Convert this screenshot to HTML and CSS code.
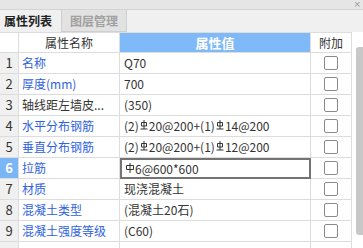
FILE: index.html
```html
<!DOCTYPE html>
<html>
<head>
<meta charset="utf-8">
<link rel="stylesheet" href="styles.css">
</head>
<body>
<div class="panel">
  <div class="titlebar"><span class="close">×</span></div>
  <div class="tabs">
    <div class="tab active">属性列表</div>
    <div class="tab">图层管理</div>
  </div>
  <div class="gridwrap">
    <div class="grid">
      <div class="c num hd"></div>
      <div class="c name hd center">属性名称</div>
      <div class="c val hd valhd">属性值</div>
      <div class="c add hd center">附加</div>

      <div class="c num">1</div>
      <div class="c name blue">名称</div>
      <div class="c val">Q70</div>
      <div class="c add"><span class="cb"></span></div>

      <div class="c num">2</div>
      <div class="c name blue">厚度(mm)</div>
      <div class="c val">700</div>
      <div class="c add"><span class="cb"></span></div>

      <div class="c num">3</div>
      <div class="c name">轴线距左墙皮...</div>
      <div class="c val">(350)</div>
      <div class="c add"><span class="cb"></span></div>

      <div class="c num">4</div>
      <div class="c name blue">水平分布钢筋</div>
      <div class="c val">(2)<svg class="rb" viewBox="0 0 8 10"><path d="M1.5 2.5h5v3.5h-5z M4 0v9 M0.5 9h7" fill="none" stroke="#333" stroke-width="1"/></svg>20@200+(1)<svg class="rb" viewBox="0 0 8 10"><path d="M1.5 2.5h5v3.5h-5z M4 0v9 M0.5 9h7" fill="none" stroke="#333" stroke-width="1"/></svg>14@200</div>
      <div class="c add"><span class="cb"></span></div>

      <div class="c num">5</div>
      <div class="c name blue">垂直分布钢筋</div>
      <div class="c val">(2)<svg class="rb" viewBox="0 0 8 10"><path d="M1.5 2.5h5v3.5h-5z M4 0v9 M0.5 9h7" fill="none" stroke="#333" stroke-width="1"/></svg>20@200+(1)<svg class="rb" viewBox="0 0 8 10"><path d="M1.5 2.5h5v3.5h-5z M4 0v9 M0.5 9h7" fill="none" stroke="#333" stroke-width="1"/></svg>12@200</div>
      <div class="c add"><span class="cb"></span></div>

      <div class="c num sel">6</div>
      <div class="c name blue">拉筋</div>
      <div class="c val edit"><svg class="rb" viewBox="0 0 8 10"><path d="M0.5 2.5h7v4h-7z M4 0v10" fill="none" stroke="#333" stroke-width="1"/></svg>6@600*600</div>
      <div class="c add"><span class="cb"></span></div>

      <div class="c num">7</div>
      <div class="c name blue">材质</div>
      <div class="c val">现浇混凝土</div>
      <div class="c add"><span class="cb"></span></div>

      <div class="c num">8</div>
      <div class="c name blue">混凝土类型</div>
      <div class="c val">(混凝土20石)</div>
      <div class="c add"><span class="cb"></span></div>

      <div class="c num">9</div>
      <div class="c name blue">混凝土强度等级</div>
      <div class="c val">(C60)</div>
      <div class="c add"><span class="cb"></span></div>

      <div class="c num"></div>
      <div class="c name"></div>
      <div class="c val"></div>
      <div class="c add"></div>
    </div>
    <div class="scroll"><div class="thumb"></div></div>
  </div>
</div>
</body>
</html>
```

FILE: styles.css
```css
html, body {
  margin: 0;
  padding: 0;
  background: #ffffff;
}
body {
  font-family: "Noto Sans CJK SC", "Noto Sans", sans-serif;
  font-size: 12px;
  color: #333;
  width: 363px;
  height: 248px;
  overflow: hidden;
}
.panel {
  display: flex;
  flex-direction: column;
  height: 248px;
}
.titlebar {
  height: 9px;
  background: #e6e6e6;
  border-bottom: 1px solid #d4d4d4;
  display: flex;
  justify-content: flex-end;
  align-items: center;
  padding-right: 2px;
  overflow: hidden;
}
.close {
  font-family: "DejaVu Sans", sans-serif;
  font-size: 9px;
  color: #9a9a9a;
  line-height: 9px;
}
.tabs {
  height: 22px;
  background: #f0f0f0;
  display: flex;
}
.tab {
  height: 22px;
  line-height: 22px;
  padding: 0 4px;
  font-weight: bold;
  color: #a0a0a0;
  background: #e2e2e2;
  border-right: 1px solid #cfcfcf;
  border-bottom: 1px solid #cfcfcf;
  box-sizing: border-box;
  width: 65px;
  text-align: center;
}
.tab.active {
  width: 62px;
  color: #222;
  background: #f0f0f0;
  border-bottom: none;
  text-align: left;
}
.gridwrap {
  display: flex;
  flex: 1;
  min-height: 0;
}
.grid {
  display: grid;
  grid-template-columns: 19px 101px 191px 41px;
  grid-auto-rows: 21px;
  align-content: start;
  overflow: hidden;
}
.c {
  box-sizing: border-box;
  border-right: 1px solid #dcdcdc;
  border-bottom: 1px solid #dcdcdc;
  line-height: 20px;
  white-space: nowrap;
  overflow: hidden;
  padding-left: 3px;
  color: #333;
}
.c.num {
  background: #f0f0f0;
  padding: 0;
  text-align: center;
  font-size: 13px;
}
.c.num.sel {
  background: #7ab5f5;
  color: #fff;
  font-weight: bold;
}
.c.hd {
  border-top: 1px solid #dcdcdc;
}
.c.num.hd {
  background: #fff;
}
.center {
  text-align: center;
  padding-left: 0;
}
.c.valhd {
  background: #7fb9f7;
  color: #fff;
  font-weight: bold;
  text-align: center;
  padding-left: 0;
  font-size: 13px;
}
.blue {
  color: #2f62de;
}
.val {
  padding-left: 4px;
}
.edit {
  border: 2px solid #747474;
  line-height: 17px;
  padding-left: 3px;
}
.add {
  display: flex;
  align-items: center;
  justify-content: center;
  padding: 0;
}
.cb {
  width: 12px;
  height: 12px;
  border: 1px solid #8a8a8a;
  border-radius: 2px;
  background: #fff;
}
.rb {
  width: 8px;
  height: 10px;
  vertical-align: 1px;
  margin: 0 1px;
}
.scroll {
  flex: 1;
  display: flex;
  justify-content: flex-end;
  padding-top: 15px;
}
.thumb {
  width: 7px;
  height: 188px;
  background: #c8c8c8;
  border-radius: 3px 0 0 3px;
}
```
